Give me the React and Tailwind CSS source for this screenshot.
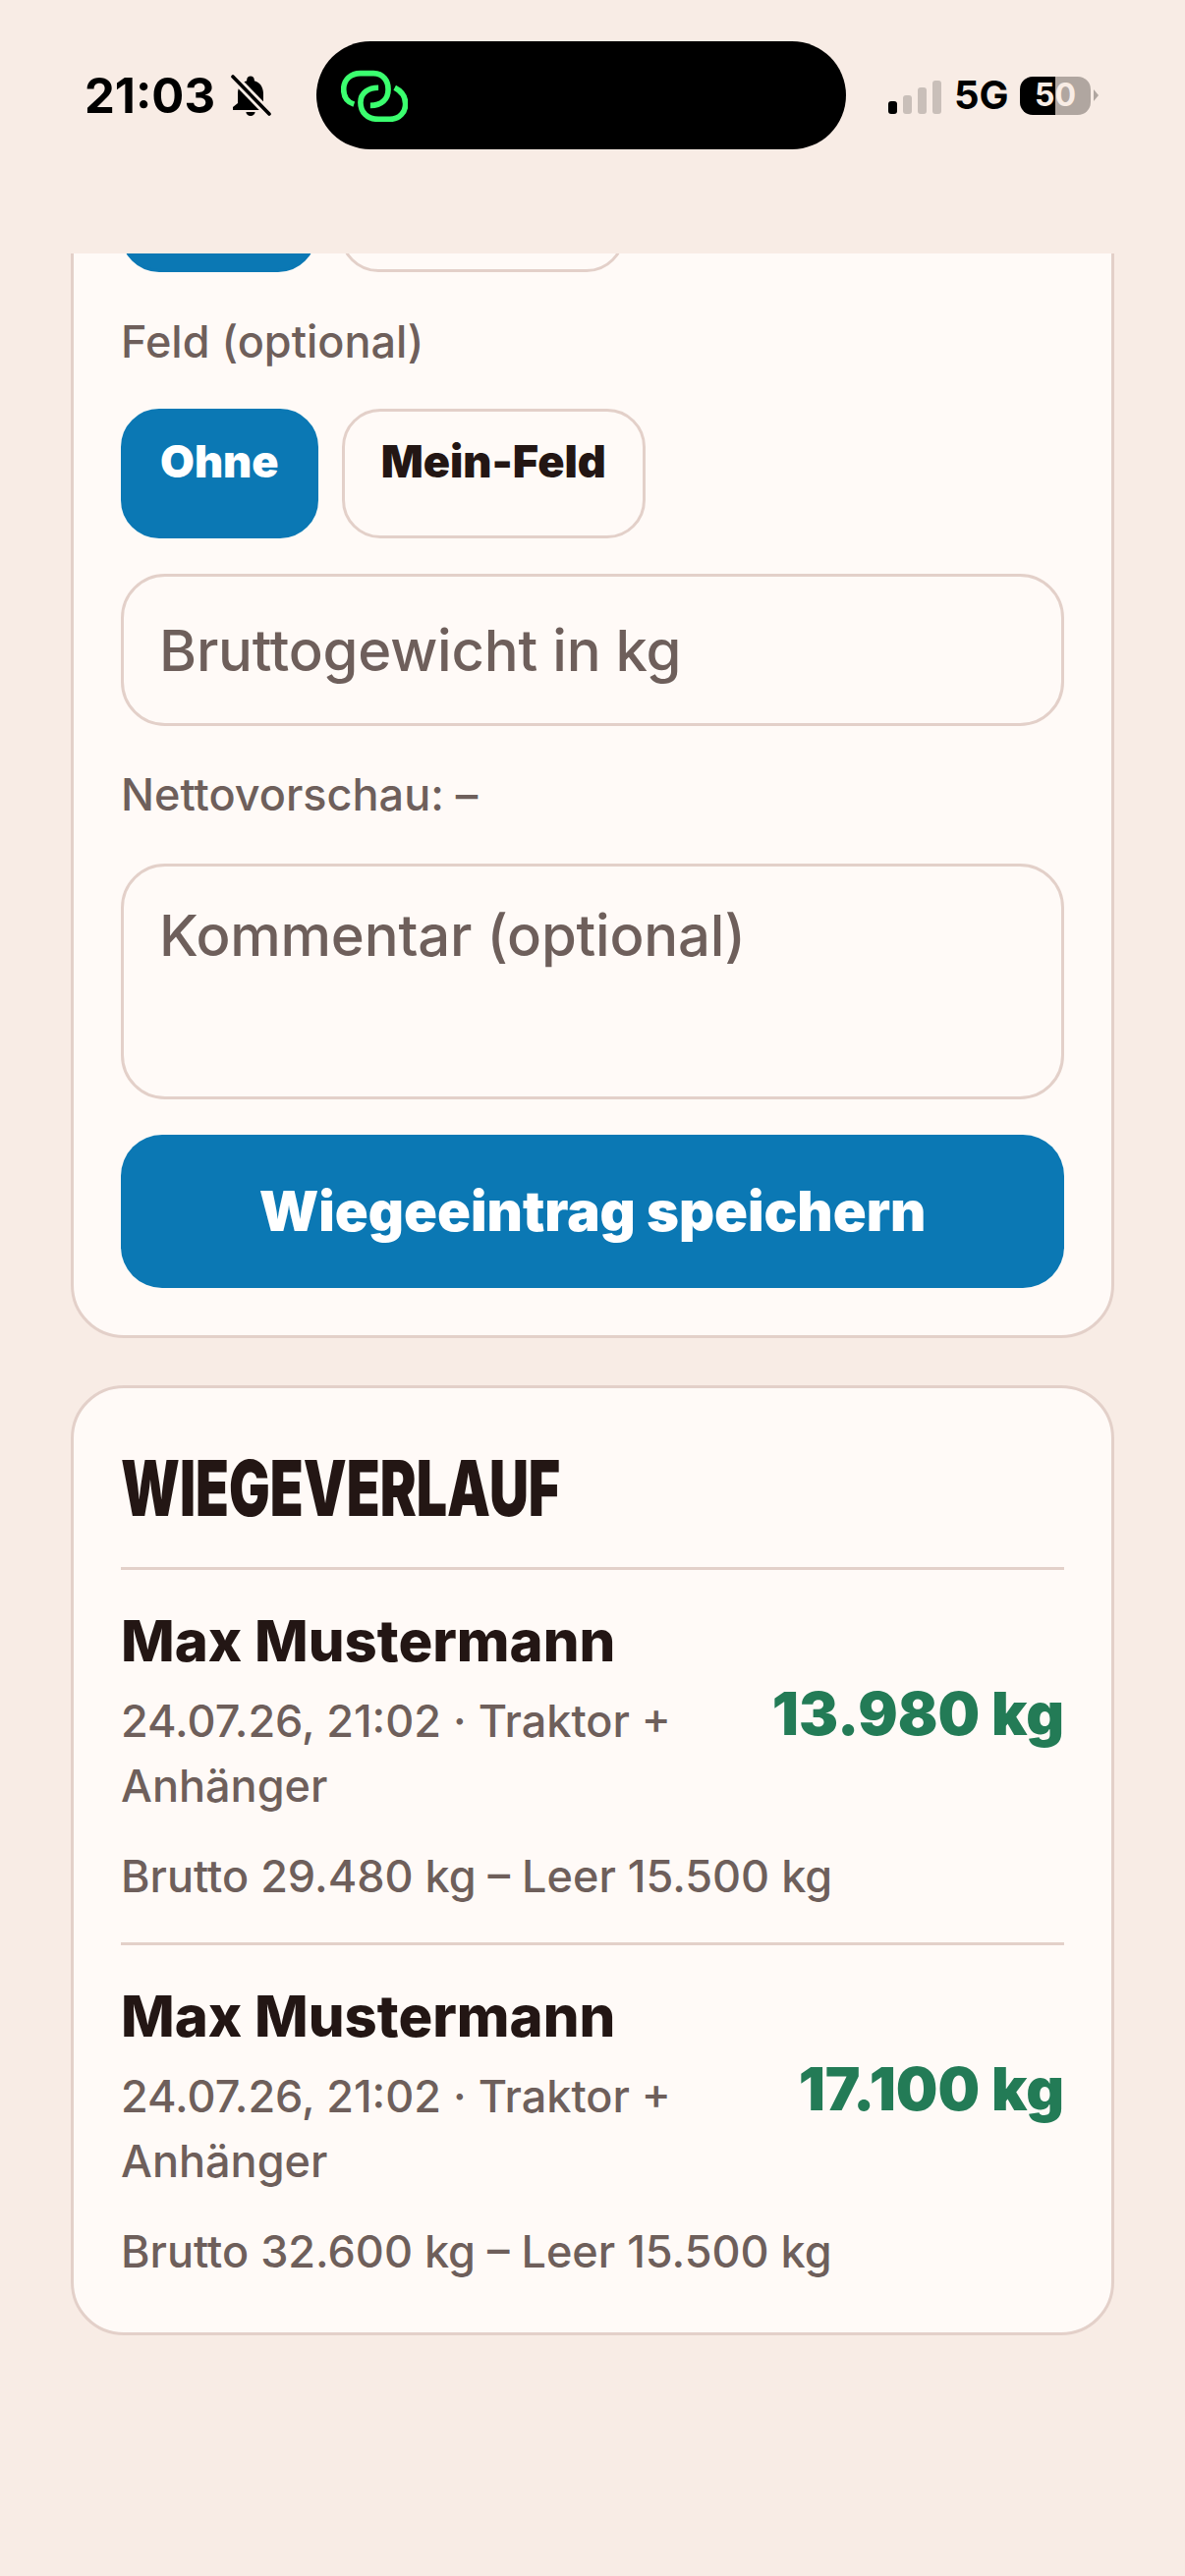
const entries = [
  { name: "Max Mustermann", net: "13.980 kg", brutto: "Brutto 29.480 kg – Leer 15.500 kg" },
  { name: "Max Mustermann", net: "17.100 kg", brutto: "Brutto 32.600 kg – Leer 15.500 kg" },
];

function BellOff() {
  return (
    <svg viewBox="0 0 24 24" className="ml-[12px] h-[48px] w-[48px]">
      <path
        fill="#000"
        d="M12 22.500c1.300 0 2.300-.9 2.300-2h-4.600c0 1.100 1 2 2.300 2zm6.500-6.500v-5c0-3.100-1.700-5.700-4.600-6.400V4c0-1-.8-1.800-1.900-1.800s-1.900.8-1.900 1.800v.6C7.200 5.300 5.500 7.900 5.500 11v5l-2.500 2v1.500h18V18l-2.500-2z"
      />
      <path d="M3 2.500L21.500 21.500" stroke="#f8ece5" strokeWidth="4.500" />
      <path d="M3 2.500L21.500 21.500" stroke="#000" strokeWidth="1.800" strokeLinecap="round" />
    </svg>
  );
}

function LinkIcon() {
  return (
    <svg viewBox="0 0 205 160" fill="none" className="ml-[25px] h-[53px] w-[68px]">
      <path
        d="M40 106C15 98 8 80 8 60C8 30 30 11 60 11H100C130 11 145 35 145 60C145 90 125 110 90 110"
        stroke="#3bff6f"
        strokeWidth="17"
      />
      <path
        d="M115 55C85 55 60 70 60 100C60 130 80 152 115 152H150C180 152 198 130 198 105C198 80 185 65 165 55"
        stroke="#3bff6f"
        strokeWidth="17"
      />
    </svg>
  );
}

function StatusBar() {
  return (
    <div className="relative z-10 flex h-[258px] shrink-0 items-start bg-[#f8ece5] pl-[86px] pt-[42px] font-['Inter',sans-serif]">
      <div className="flex h-[110px] w-[236px] items-center">
        <span className="text-[49px] font-bold leading-none text-black">21:03</span>
        <BellOff />
      </div>
      <div className="flex h-[110px] w-[539px] items-center rounded-full bg-black">
        <LinkIcon />
      </div>
      <div className="ml-[43px] flex h-[110px] items-center">
        <div className="flex items-end gap-[6px] pt-[4px]">
          <div className="h-[13px] w-[9px] rounded-[3px] bg-black" />
          <div className="h-[19px] w-[9px] rounded-[3px] bg-[#c9bfb9]" />
          <div className="h-[27px] w-[9px] rounded-[3px] bg-[#c9bfb9]" />
          <div className="h-[34px] w-[9px] rounded-[3px] bg-[#c9bfb9]" />
        </div>
        <span className="ml-[13px] w-[55px] text-[40px] font-bold leading-none text-black">5G</span>
        <div className="ml-[12px] flex h-[39px] w-[72px] items-center justify-center rounded-[13px] bg-[linear-gradient(90deg,#000_50%,#b0a6a0_50%)] text-[32px] font-bold leading-none text-[#f8ece5]">
          50
        </div>
        <div className="ml-[3px] h-0 w-0 border-y-[6px] border-l-[5px] border-y-transparent border-l-[#b0a6a0]" />
      </div>
    </div>
  );
}

function Chip({ active, children, className }) {
  return (
    <div
      className={
        "h-[132px] rounded-[39px] border-[3px] px-[37px] pt-[22px] text-[45px] font-black leading-[58px] " +
        (active ? "border-[#0b78b4] bg-[#0b78b4] text-white " : "border-[#e3d0c9] text-[#231614] ") +
        (className || "")
      }
    >
      {children}
    </div>
  );
}

function Entry({ item }) {
  return (
    <div className="border-t-[3px] border-[#e3d0c9] pb-[34px] pt-[38px] last:pb-[7px]">
      <div className="flex items-center justify-between">
        <div className="w-[600px]">
          <div className="mb-[15px] text-[58px] font-extrabold leading-[68px] text-[#231614]">{item.name}</div>
          <div className="text-[45px] font-medium leading-[66px] text-[#6e5f5b]">24.07.26, 21:02 · Traktor + Anhänger</div>
        </div>
        <div className="text-[60px] font-black leading-none text-[#237b56]">{item.net}</div>
      </div>
      <div className="mt-[26px] text-[45px] font-medium leading-[66px] text-[#6e5f5b]">{item.brutto}</div>
    </div>
  );
}

export default function App() {
  return (
    <div className="flex h-[2622px] flex-col overflow-hidden bg-[#f8ece5] font-['Inter',sans-serif]">
      <StatusBar />
      <div className="flex flex-col gap-[48px] px-[72px]">
        {/* form card, scrolled under the status bar */}
        <div className="-mt-[152px] rounded-[54px] border-[3px] border-[#e3d0c9] bg-[#fffaf7] px-[48px] pb-[48px] pt-[36px]">
          <div className="flex gap-[24px]">
            <Chip active className="w-[199px]">&nbsp;</Chip>
            <Chip className="w-[290px]">&nbsp;</Chip>
          </div>
          <div className="mb-[39px] mt-[42px] text-[45px] font-medium leading-[58px] text-[#6e5f5b]">Feld (optional)</div>
          <div className="flex gap-[24px]">
            <Chip active>Ohne</Chip>
            <Chip>Mein-Feld</Chip>
          </div>
          <input
            placeholder="Bruttogewicht in kg"
            className="mt-[36px] block h-[155px] w-full rounded-[45px] border-[3px] border-[#e3d0c9] bg-transparent px-[36px] text-[58px] font-medium tracking-[-0.2px] text-[#231614] outline-none placeholder:text-[#6e5f5b]"
          />
          <div className="my-[36px] text-[45px] font-medium leading-[68px] text-[#6e5f5b]">Nettovorschau: –</div>
          <textarea
            placeholder="Kommentar (optional)"
            className="block h-[240px] w-full resize-none rounded-[45px] border-[3px] border-[#e3d0c9] bg-transparent px-[36px] pt-[36px] text-[58px] font-medium leading-[68px] tracking-[-0.2px] text-[#231614] outline-none placeholder:text-[#6e5f5b]"
          />
          <button className="mt-[36px] block h-[156px] w-full rounded-[42px] bg-[#0b78b4] text-[56px] font-black text-white">
            Wiegeeintrag speichern
          </button>
        </div>

        {/* history */}
        <div className="rounded-[54px] border-[3px] border-[#e3d0c9] bg-[#fffaf7] px-[48px] pb-[42px] pt-[52px]">
          <h2 className="mb-[30px] h-[100px] origin-left scale-x-[0.71] whitespace-nowrap text-[78px] font-black uppercase leading-[100px] text-[#231614]">
            Wiegeverlauf
          </h2>
          {entries.map((item, i) => (
            <Entry key={i} item={item} />
          ))}
        </div>
      </div>
    </div>
  );
}
